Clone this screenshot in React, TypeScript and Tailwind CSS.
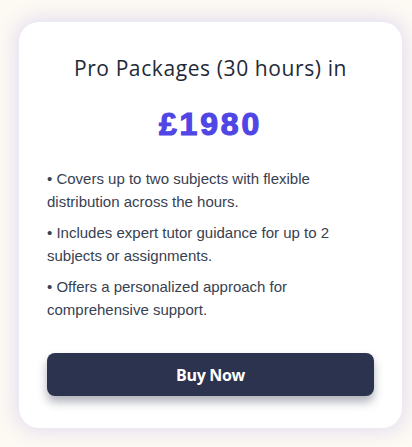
import React from "react";

const points = [
  "Covers up to two subjects with flexible distribution across the hours.",
  "Includes expert tutor guidance for up to 2 subjects or assignments.",
  "Offers a personalized approach for comprehensive support.",
];

const App = () => {
  return (
    <div className="w-[412px] h-[447px] bg-[#fdf9f3] pt-[22px] overflow-hidden">
      {/* card */}
      <div className="ml-[19px] w-[383px] bg-white rounded-[20px] px-7 pt-8 pb-8 shadow-[0_0_18px_5px_rgba(120,110,230,0.17)]">
        <div className="text-center text-[21px] leading-[28px] tracking-[0.6px] text-[#1f2937] font-['Open_Sans',sans-serif]">
          Pro Packages (30 hours) in
        </div>
        <div className="mt-[22px] text-center text-[32px] leading-[40px] font-bold tracking-[2.8px] text-[#4f46e5] [-webkit-text-stroke:1.2px_#4f46e5] font-['Liberation_Sans',Arial,sans-serif]">
          £1980
        </div>
        {/* bullets */}
        <div className="mt-[24px] flex flex-col gap-[9px] font-['Liberation_Sans',Arial,sans-serif] text-[15px] leading-[22.5px] text-[#374151]">
          {points.map((p) => (
            <div key={p}>• {p}</div>
          ))}
        </div>
        <button className="mt-[32px] w-full h-[43px] rounded-lg bg-[#2c334f] text-white text-[16px] font-bold font-['Open_Sans',sans-serif] tracking-[-0.3px] shadow-[0_6px_10px_rgba(30,35,60,0.35)]">
          Buy Now
        </button>
      </div>
    </div>
  );
};

export default App;
